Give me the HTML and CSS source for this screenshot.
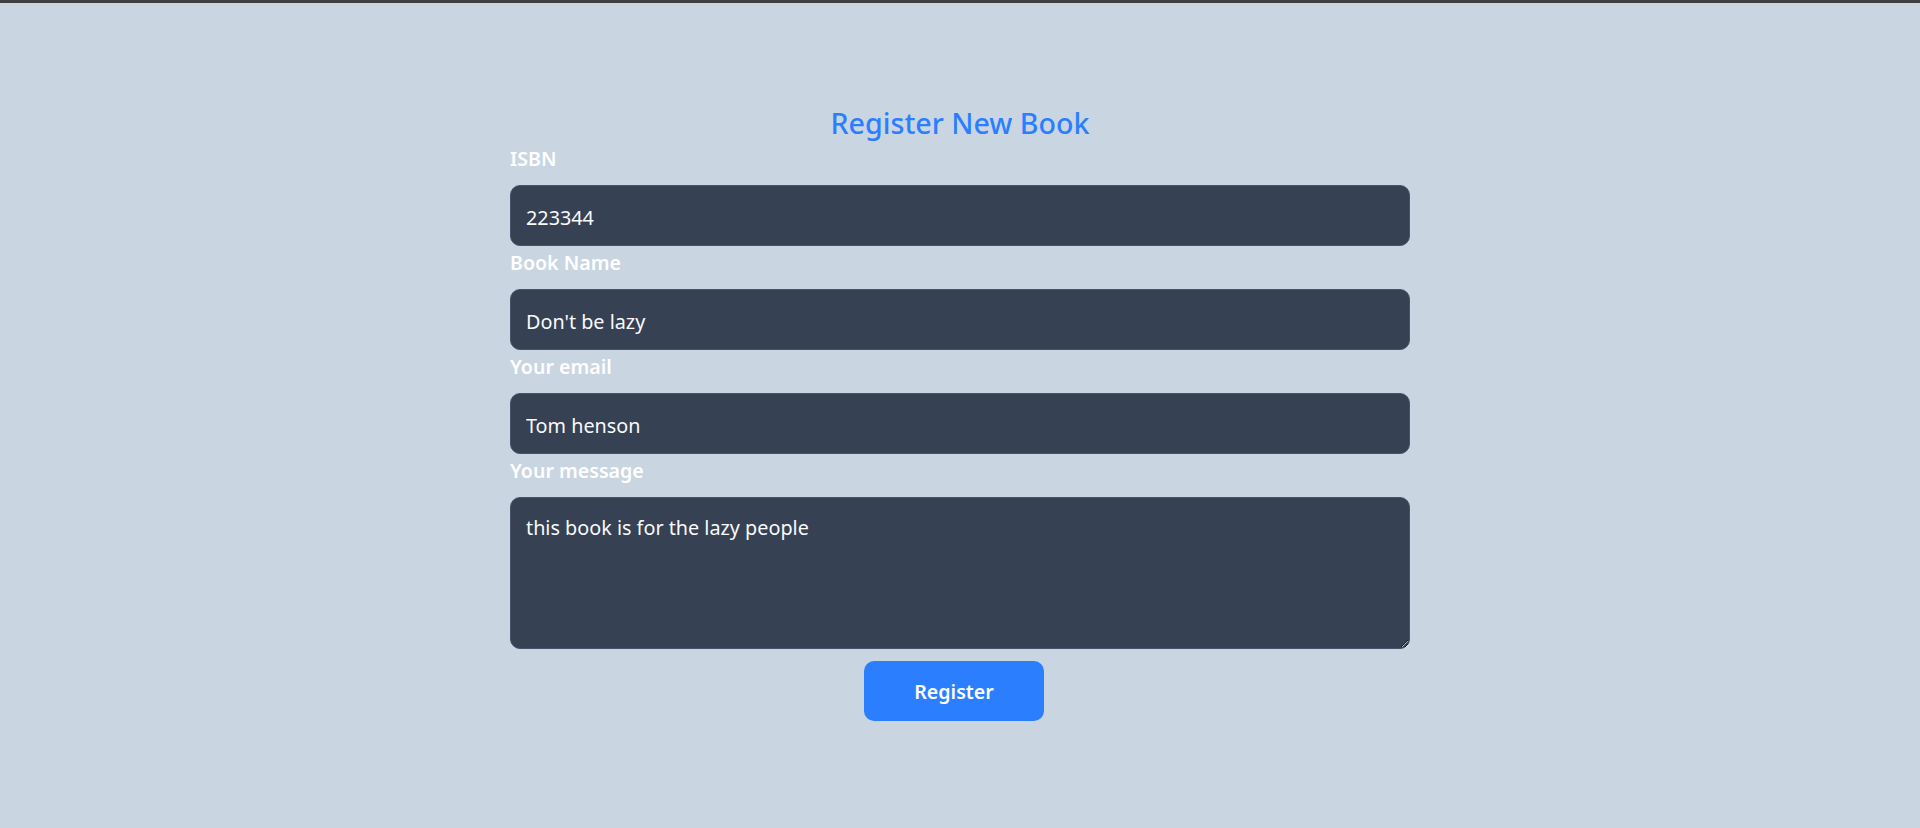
FILE: index.html
```html
<!DOCTYPE html>
<html lang="en">
<head>
<meta charset="utf-8">
<title>Register New Book</title>
<link rel="stylesheet" href="styles.css">
</head>
<body>
<div class="topbar"></div>
<main class="page">
  <form class="book-form">
    <h1 class="title">Register New Book</h1>
    <label class="label" for="isbn">ISBN</label>
    <input class="field" id="isbn" type="text" value="223344">
    <label class="label" for="name">Book Name</label>
    <input class="field" id="name" type="text" value="Don't be lazy">
    <label class="label" for="email">Your email</label>
    <input class="field" id="email" type="text" value="Tom henson">
    <label class="label" for="msg">Your message</label>
    <textarea class="field area" id="msg">this book is for the lazy people</textarea>
    <div class="actions">
      <button class="btn" type="button">Register</button>
    </div>
  </form>
</main>
</body>
</html>
```
FILE: styles.css
```css
html, body {
  margin: 0;
  padding: 0;
}
body {
  background: #cad5e2;
  font-family: "Noto Sans", "Open Sans", sans-serif;
  min-height: 828px;
}
.topbar {
  height: 3px;
  background: #3f3f3f;
}
.page {
  display: flex;
  justify-content: center;
  padding-top: 102px;
}
.book-form {
  width: 900px;
  display: flex;
  flex-direction: column;
}
.title {
  margin: 0 0 4px;
  text-align: center;
  font-size: 28.6px;
  line-height: 36px;
  font-weight: 500;
  color: #2b7fff;
}
.label {
  display: block;
  font-size: 19.6px;
  line-height: 28px;
  font-weight: 600;
  color: #ffffff;
  margin-bottom: 12px;
}
.field {
  box-sizing: border-box;
  display: block;
  width: 100%;
  height: 61px;
  margin: 0 0 3px;
  padding: 3px 15px 0;
  border: 1px solid #47526a;
  border-radius: 10px;
  background: #364153;
  color: #f9fafb;
  font-family: inherit;
  font-size: 19.8px;
  line-height: 28px;
  outline: none;
}
.area {
  height: 152px;
  padding: 16px 15px;
  resize: vertical;
  margin-bottom: 12px;
}
.actions {
  display: flex;
  justify-content: center;
}
.btn {
  width: 180px;
  height: 60px;
  margin-right: 12px;
  padding-top: 2px;
  border: none;
  border-radius: 10px;
  background: #2b7fff;
  color: #ffffff;
  font-family: inherit;
  font-size: 19.6px;
  font-weight: 600;
  cursor: pointer;
}
```
